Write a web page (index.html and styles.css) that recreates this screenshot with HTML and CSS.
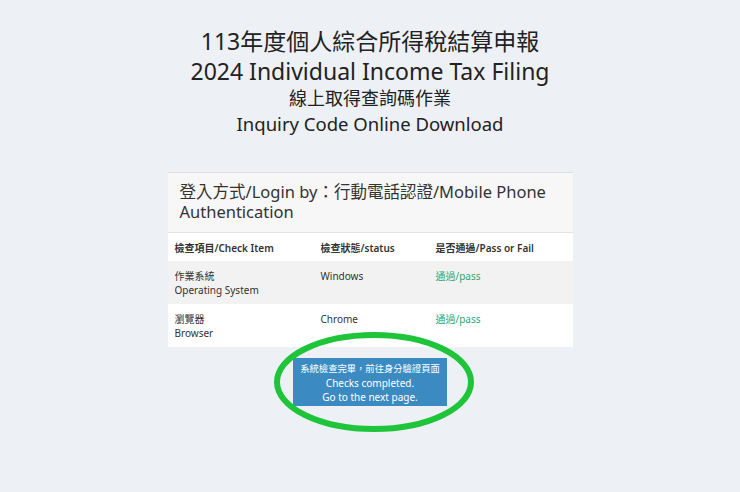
FILE: index.html
```html
<!DOCTYPE html>
<html lang="zh-Hant">
<head>
<meta charset="utf-8">
<title>Inquiry Code Online Download</title>
<link rel="stylesheet" href="styles.css">
</head>
<body>
<header class="titles">
  <h1 class="t1">113年度個人綜合所得稅結算申報</h1>
  <h1 class="t2">2024 Individual Income Tax Filing</h1>
  <h2 class="t3">線上取得查詢碼作業</h2>
  <h2 class="t4">Inquiry Code Online Download</h2>
</header>
<main class="card">
  <div class="card-head">登入方式/Login by：行動電話認證/Mobile Phone Authentication</div>
  <table class="checks">
    <thead>
      <tr><th class="c1">檢查項目/Check Item</th><th class="c2">檢查狀態/status</th><th class="c3">是否通過/Pass or Fail</th></tr>
    </thead>
    <tbody>
      <tr class="odd"><td>作業系統<br>Operating System</td><td>Windows</td><td class="pass">通過/pass</td></tr>
      <tr><td>瀏覽器<br>Browser</td><td>Chrome</td><td class="pass">通過/pass</td></tr>
    </tbody>
  </table>
</main>
<div class="action">
  <div class="btn-wrap">
    <button class="btn"><span class="zh">系統檢查完畢，前往身分驗證頁面</span><br>Checks completed.<br>Go to the next page.</button>
    <svg class="ring" width="206" height="106" viewBox="0 0 206 106"><ellipse cx="103" cy="53" rx="97" ry="47" fill="none" stroke="#1ec43a" stroke-width="6"/></svg>
  </div>
</div>
</body>
</html>
```
FILE: styles.css
```css
html, body {
  margin: 0;
  padding: 0;
}
body {
  background: #edf0f5;
  font-family: "Noto Sans", "Noto Sans CJK TC", sans-serif;
  color: #333;
  width: 740px;
  height: 492px;
  overflow: hidden;
}
.titles {
  text-align: center;
  padding-top: 26px;
  color: #222;
}
.titles h1, .titles h2 {
  margin: 0;
  font-weight: 400;
}
.t1 {
  font-size: 23px;
  line-height: 30px;
}
.t2 {
  font-size: 23px;
  line-height: 30px;
}
.t3 {
  font-size: 18px;
  line-height: 24px;
}
.t4 {
  font-size: 18.5px;
  line-height: 27px;
}
.card {
  width: 405px;
  margin: 35px auto 0;
  background: #fff;
  border-top: 1px solid #dcdfe3;
}
.card-head {
  background: #f7f7f7;
  border-bottom: 1px solid #e2e2e2;
  font-size: 16.5px;
  line-height: 20px;
  padding: 9px 12px 10px;
  color: #333;
}
.checks {
  width: 100%;
  border-collapse: collapse;
  font-size: 10px;
}
.checks th {
  text-align: left;
  font-weight: 600;
  height: 28px;
  padding: 0 7px;
  vertical-align: middle;
}
.checks td {
  padding: 8px 7px 7px;
  vertical-align: top;
  line-height: 14px;
  height: 27px;
}
.c1 { width: 132px; }
.c2 { width: 101px; }
.odd { background: #f2f2f2; }
.pass { color: #2ea872; }
.action {
  display: flex;
  justify-content: center;
  margin-top: 11px;
}
.btn-wrap {
  position: relative;
}
.btn {
  display: block;
  width: 154px;
  height: 48px;
  border: 0;
  background: #3b8bc2;
  color: #fff;
  font-family: inherit;
  font-size: 10px;
  line-height: 14px;
  padding: 0;
  text-align: center;
}
.zh {
  font-size: 9.3px;
}
.ring {
  position: absolute;
  left: -22px;
  top: -29px;
  pointer-events: none;
}
```
